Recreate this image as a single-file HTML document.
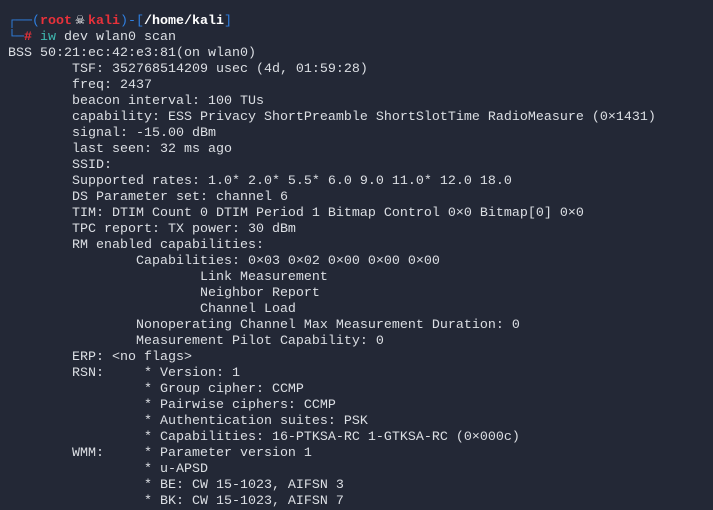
<!DOCTYPE html>
<html><head><meta charset="utf-8"><style>
html,body{margin:0;padding:0;background:#232836;width:713px;height:510px;overflow:hidden}
pre{margin:0;position:absolute;left:8px;top:14px;font-family:"Liberation Mono","DejaVu Sans Mono",monospace;font-size:13.33px;line-height:16px;color:#dcdfe4;white-space:pre}
.b{color:#2f7fe0}.r{color:#e8313a;font-weight:bold}.w{color:#fff;font-weight:bold}.c{color:#3fb8b0}
.sk{display:inline-block;width:16px;text-align:center;color:#fff;font-size:15px;line-height:14px}
</style></head><body>
<pre><span class="b">┌──(</span><span class="r">root</span><span class="sk">☠</span><span class="r">kali</span><span class="b">)-[</span><span class="w">/home/kali</span><span class="b">]</span>
<span class="b">└─</span><span class="r">#</span> <span class="c">iw</span> dev wlan0 scan
BSS 50:21:ec:42:e3:81(on wlan0)
        TSF: 352768514209 usec (4d, 01:59:28)
        freq: 2437
        beacon interval: 100 TUs
        capability: ESS Privacy ShortPreamble ShortSlotTime RadioMeasure (0×1431)
        signal: -15.00 dBm
        last seen: 32 ms ago
        SSID:
        Supported rates: 1.0* 2.0* 5.5* 6.0 9.0 11.0* 12.0 18.0
        DS Parameter set: channel 6
        TIM: DTIM Count 0 DTIM Period 1 Bitmap Control 0×0 Bitmap[0] 0×0
        TPC report: TX power: 30 dBm
        RM enabled capabilities:
                Capabilities: 0×03 0×02 0×00 0×00 0×00
                        Link Measurement
                        Neighbor Report
                        Channel Load
                Nonoperating Channel Max Measurement Duration: 0
                Measurement Pilot Capability: 0
        ERP: &lt;no flags&gt;
        RSN:     * Version: 1
                 * Group cipher: CCMP
                 * Pairwise ciphers: CCMP
                 * Authentication suites: PSK
                 * Capabilities: 16-PTKSA-RC 1-GTKSA-RC (0×000c)
        WMM:     * Parameter version 1
                 * u-APSD
                 * BE: CW 15-1023, AIFSN 3
                 * BK: CW 15-1023, AIFSN 7</pre>
</body></html>
